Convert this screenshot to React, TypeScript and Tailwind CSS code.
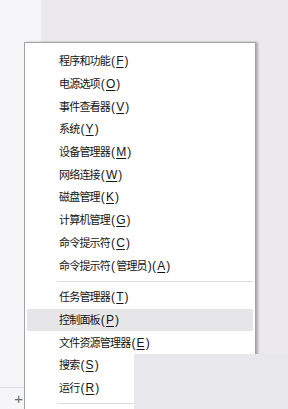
const groups: { label: string; note?: string; key: string; active?: boolean }[][] = [
  [
    { label: '程序和功能', key: 'F' },
    { label: '电源选项', key: 'O' },
    { label: '事件查看器', key: 'V' },
    { label: '系统', key: 'Y' },
    { label: '设备管理器', key: 'M' },
    { label: '网络连接', key: 'W' },
    { label: '磁盘管理', key: 'K' },
    { label: '计算机管理', key: 'G' },
    { label: '命令提示符', key: 'C' },
    { label: '命令提示符', note: '管理员', key: 'A' },
  ],
  [
    { label: '任务管理器', key: 'T' },
    { label: '控制面板', key: 'P', active: true },
    { label: '文件资源管理器', key: 'E' },
    { label: '搜索', key: 'S' },
    { label: '运行', key: 'R' },
  ],
];

const latin = '"Liberation Sans", "Noto Sans", sans-serif';
const cjk = '"Noto Sans CJK SC", "Noto Sans", sans-serif';

// Latin brackets sit a little wider than the CJK glyphs in the shot
function Paren({ children }: { children: React.ReactNode }) {
  return (
    <span className="text-[12px] ml-[1px]" style={{ fontFamily: latin }}>
      <span className="mr-[2px]">(</span>
      {children}
      <span className="ml-[1px]">)</span>
    </span>
  );
}

function MenuItem({ label, note, hotkey, active }: { label: string; note?: string; hotkey: string; active?: boolean }) {
  return (
    <div
      className={`mx-[2px] h-[22.7px] flex items-center pl-[32px] text-[11px] tracking-[-0.8px] text-[#141414] ${
        active ? 'bg-[#e6e5e8]' : ''
      }`}
    >
      <span className="whitespace-nowrap">
        {label}
        {note && (
          <Paren>
            <span className="text-[11px]" style={{ fontFamily: cjk }}>{note}</span>
          </Paren>
        )}
        <Paren>
          <span className="underline underline-offset-2 tracking-normal">{hotkey}</span>
        </Paren>
      </span>
    </div>
  );
}

export default function App() {
  return (
    <div
      className="relative w-[288px] h-[409px] overflow-hidden bg-[#ebe9ee] flex flex-col"
      style={{ fontFamily: cjk }}
    >
      {/* top band */}
      <div className="h-[42px] flex shrink-0">
        <div className="w-[41px] bg-[#f6f5f8]" />
        <div className="flex-1 bg-[#ebe9ee]" />
      </div>

      <div className="flex flex-1 min-h-0">
        {/* left taskbar strip */}
        <div className="w-[24px] bg-[#f6f5f8] flex flex-col justify-end">
          <div className="h-[22px] border-t border-[#dcdbe0] flex items-center justify-end pr-[1px]">
            <span className="text-[15px] leading-none text-[#6b6b6b] font-light" style={{ fontFamily: latin }}>+</span>
          </div>
        </div>

        {/* context menu */}
        <div className="w-[232px] bg-white border border-[#a3a2a7] border-b-0 shadow-[2px_0_2px_rgba(60,60,70,0.35)] pt-[7px]">
          {groups.map((items, gi) => (
            <div key={gi}>
              {items.map((it) => (
                <MenuItem key={it.label + (it.note ?? '')} label={it.label} note={it.note} hotkey={it.key} active={it.active} />
              ))}
              <div className="h-[9px] flex items-center pl-[32px] pr-[2px]">
                <div className="h-px w-full bg-[#dcdcdc]" />
              </div>
            </div>
          ))}
        </div>

        <div className="flex-1" />
      </div>

      {/* window sitting over the menu's lower right */}
      <div className="absolute left-[134px] top-[354px] right-0 bottom-0 bg-[#e8e8ec]" />
    </div>
  );
}
